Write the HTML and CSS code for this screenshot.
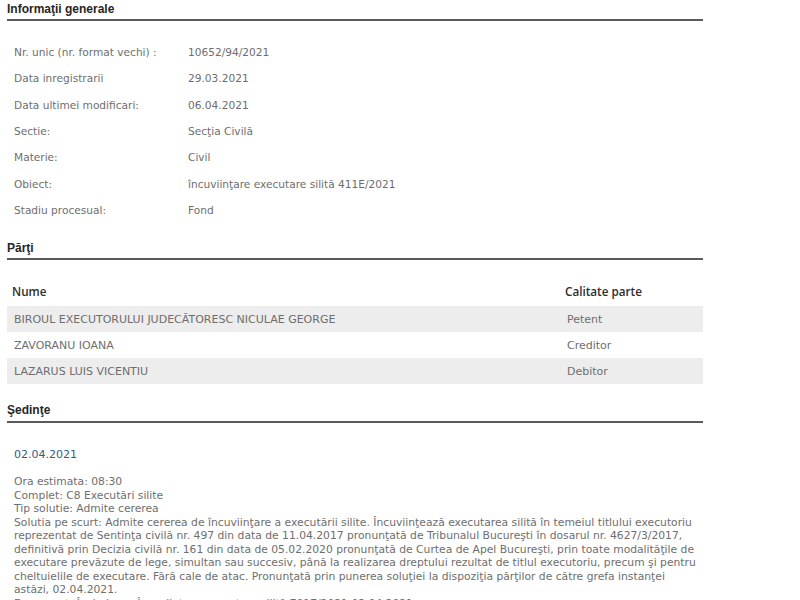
FILE: index.html
```html
<!DOCTYPE html>
<html lang="ro">
<head>
    <meta charset="UTF-8">
    <meta name="viewport" content="width=device-width, initial-scale=1.0">
    <title>Dosar 10652/94/2021</title>
    <link rel="stylesheet" href="styles.css">
</head>
<body>
    <div class="page">
        <!-- informatii generale -->
        <h3 class="section-title">Informaţii generale</h3>
        <table class="info-table">
            <tr><td class="label">Nr. unic (nr. format vechi) :</td><td>10652/94/2021</td></tr>
            <tr><td class="label">Data inregistrarii</td><td>29.03.2021</td></tr>
            <tr><td class="label">Data ultimei modificari:</td><td>06.04.2021</td></tr>
            <tr><td class="label">Sectie:</td><td>Secţia Civilă</td></tr>
            <tr><td class="label">Materie:</td><td>Civil</td></tr>
            <tr><td class="label">Obiect:</td><td>încuviinţare executare silită 411E/2021</td></tr>
            <tr><td class="label">Stadiu procesual:</td><td>Fond</td></tr>
        </table>

        <!-- parti -->
        <h3 class="section-title parti-title">Părţi</h3>
        <table class="parti-table">
            <thead>
                <tr><th class="col-nume">Nume</th><th>Calitate parte</th></tr>
            </thead>
            <tbody>
                <tr><td>BIROUL EXECUTORULUI JUDECĂTORESC NICULAE GEORGE</td><td>Petent</td></tr>
                <tr><td>ZAVORANU IOANA</td><td>Creditor</td></tr>
                <tr><td>LAZARUS LUIS VICENTIU</td><td>Debitor</td></tr>
            </tbody>
        </table>

        <!-- sedinte -->
        <h3 class="section-title sedinte-title">Şedinţe</h3>
        <div class="sedinta">
            <div class="sedinta-data">02.04.2021</div>
            <div class="sedinta-text">
                Ora estimata: 08:30<br>
                Complet: C8 Executări silite<br>
                Tip solutie: Admite cererea<br>
                Solutia pe scurt: Admite cererea de încuviinţare a executării silite. Încuviinţează executarea silită în temeiul titlului executoriu reprezentat de Sentinţa civilă nr. 497 din data de 11.04.2017 pronunţată de Tribunalul Bucureşti în dosarul nr. 4627/3/2017, definitivă prin Decizia civilă nr. 161 din data de 05.02.2020 pronunţată de Curtea de Apel Bucureşti, prin toate modalităţile de executare prevăzute de lege, simultan sau succesiv, până la realizarea dreptului rezultat de titlul executoriu, precum şi pentru cheltuielile de executare. Fără cale de atac. Pronunţată prin punerea soluţiei la dispoziţia părţilor de către grefa instanţei astăzi, 02.04.2021.<br>
                Document: Încheiere - Încuviinţare executare silită 7017/2021 02.04.2021
            </div>
        </div>
    </div>
</body>
</html>
```

FILE: styles.css
```css
body {
    margin: 0;
    background: #fff;
    font-family: "DejaVu Sans", Verdana, sans-serif;
    font-size: 11px;
    color: #6e6e6e;
}
.page {
    width: 696px;
    padding-left: 7px;
}
.section-title {
    margin: 0;
    padding: 2px 0 3px 0;
    font-family: "Liberation Sans", Arial, sans-serif;
    font-size: 12px;
    font-weight: bold;
    color: #262626;
    border-bottom: 2px solid #5a5a5a;
}
.info-table {
    border-collapse: collapse;
    margin-top: 18px;
    font-size: 10.6px;
}
.info-table td {
    height: 26.3px;
    padding: 0 0 0 7px;
}
.info-table .label {
    width: 167px;
}
.parti-title {
    margin-top: 16px;
}
.parti-table {
    width: 100%;
    border-collapse: collapse;
    margin-top: 23px;
}
.parti-table th {
    text-align: left;
    font-family: "Open Sans", sans-serif;
    font-weight: 600;
    font-size: 11.7px;
    color: #2e2e2e;
    padding: 0 0 7px 5px;
}
.parti-table .col-nume {
    width: 548px;
}
.parti-table td {
    height: 26px;
    padding: 0 0 0 7px;
}
.parti-table tbody tr:nth-child(odd) {
    background: #ededed;
}
.sedinte-title {
    margin-top: 17px;
    padding-bottom: 4px;
}
.sedinta {
    padding: 25px 0 0 7px;
}
.sedinta-data {
    color: #2b6187;
    margin-bottom: 14px;
}
.sedinta-text {
    font-size: 10.75px;
    line-height: 13.5px;
}
```
